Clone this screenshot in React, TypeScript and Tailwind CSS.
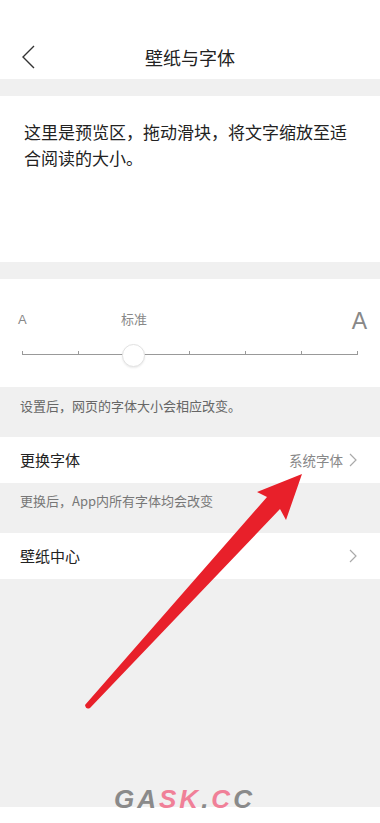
const cjk = "font-['Noto_Sans_CJK_SC','Noto_Sans',sans-serif]";
const ticks = [0, 1, 2, 3, 4, 5, 6];

function Chevron() {
  return (
    <svg width="8" height="14" viewBox="0 0 8 14" className="text-[#aaa]">
      <path d="M1 1 L7 7 L1 13" fill="none" stroke="currentColor" strokeWidth="1.2" />
    </svg>
  );
}

function SettingRow({ label, value }: { label: string; value?: string }) {
  return (
    <div className="flex h-[46px] items-center justify-between bg-white pl-5 pr-[23px]">
      <span className="text-[15px] text-[#222]">{label}</span>
      <div className="flex items-center gap-[6px]">
        {value && <span className="text-[13.5px] text-[#888]">{value}</span>}
        <Chevron />
      </div>
    </div>
  );
}

function Arrow() {
  return (
    <svg
      className="pointer-events-none absolute left-0 top-0"
      width="380"
      height="823"
      viewBox="0 0 380 823"
    >
      <path
        d="M302 474 L286 520 L280 509 L90 708 Q86 710 85 705 L267 497 L257 492 Z"
        fill="#e8202a"
      />
    </svg>
  );
}

export default function App() {
  return (
    <div className={`relative h-[823px] w-[380px] overflow-hidden bg-[#f0f0f0] ${cjk}`}>
      {/* header */}
      <div className="bg-white pt-[35px]">
        <div className="relative flex h-[44px] items-center justify-center">
          <svg
            className="absolute left-[21px] top-[10px] text-[#333]"
            width="16"
            height="24"
            viewBox="0 0 16 24"
          >
            <path d="M13 1 L2 12 L13 23" fill="none" stroke="currentColor" strokeWidth="1.4" />
          </svg>
          <h1 className="text-[18px] text-[#222]">壁纸与字体</h1>
        </div>
      </div>

      {/* preview */}
      <div className="mt-[17px] h-[166px] bg-white px-6 pt-[23px]">
        <p className="text-[17px] leading-[26px] text-[#222]">
          这里是预览区，拖动滑块，将文字缩放至适合阅读的大小。
        </p>
      </div>

      {/* slider */}
      <div className="mt-[17px] h-[108px] bg-white px-[22px] pt-[28px]">
        <div className="relative flex h-[24px] items-end text-[#888]">
          <span className="absolute left-[-4px] top-[3px] font-['Liberation_Sans',sans-serif] text-[13px]">A</span>
          <span className="absolute left-[99px] top-[2px] text-[13px]">标准</span>
          <span className="absolute right-[-9px] top-[3px] font-['Liberation_Sans',sans-serif] text-[23px] leading-none">A</span>
        </div>
        <div className="relative mt-[20px] h-[4px]">
          <div className="absolute bottom-0 left-0 right-0 h-px bg-[#999]" />
          <div className="absolute inset-0 flex justify-between">
            {ticks.map((t) => (
              <div key={t} className="h-[4px] w-px bg-[#999]" />
            ))}
          </div>
          <div className="absolute left-[100px] top-[-7px] h-[23px] w-[23px] rounded-full border border-[#e2e2e2] bg-white shadow-[0_1px_2px_rgba(0,0,0,0.08)]" />
        </div>
      </div>

      <div className="h-[50px] pl-5 pt-[10px] text-[13px] leading-[18px] text-[#666]">
        设置后，网页的字体大小会相应改变。
      </div>

      <SettingRow label="更换字体" value="系统字体" />

      <div className="h-[50px] pl-5 pt-[9px] text-[13px] leading-[18px] text-[#777]">
        更换后，App内所有字体均会改变
      </div>

      <SettingRow label="壁纸中心" />

      <div className="absolute bottom-0 left-0 h-[16px] w-full bg-white" />
      <div className="absolute left-[114px] top-[786px] font-['Liberation_Sans',sans-serif] text-[26px] font-bold italic leading-none tracking-[3px]">
        <span className="text-[#8a8a8a]">GA</span>
        <span className="text-[#f08098]">SK</span>
        <span className="text-[#8a8a8a]">.</span>
        <span className="text-[#f08098]">C</span>
        <span className="text-[#8a8a8a]">C</span>
      </div>

      <Arrow />
    </div>
  );
}
